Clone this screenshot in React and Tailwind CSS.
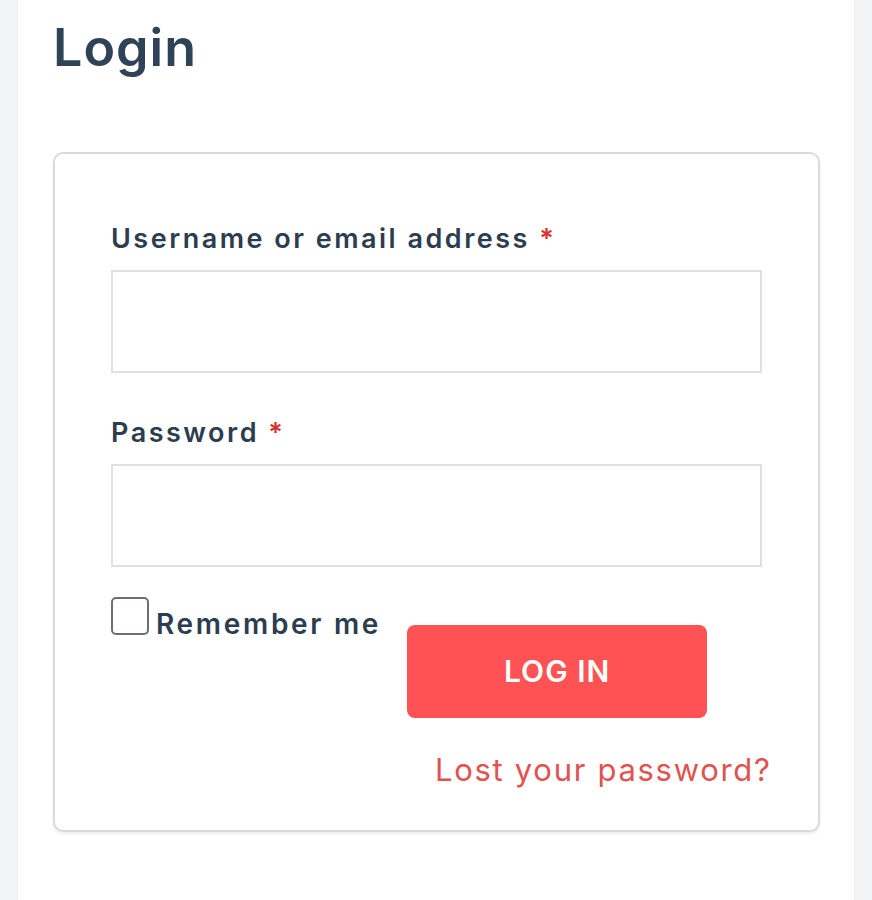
import React from 'react';

const Label = ({ children }) => (
  <label className="block text-[27px] leading-[30px] font-semibold text-[#2c3d50] tracking-[2.5px]">
    {children} <span className="text-[#d9302e]">*</span>
  </label>
);

const App = () => {
  return (
    <div className="min-h-screen bg-[#f2f3f5] px-[18px] font-['Inter',sans-serif]">
      <div className="min-h-screen bg-white pl-[35px] pr-[34px] pt-[18px]">
        <h1 className="text-[52px] leading-[60px] font-semibold text-[#2f4256] tracking-[1px]">
          Login
        </h1>

        <div className="mt-[74px] rounded-[10px] border-2 border-[#dadada] shadow-[0_2px_3px_rgba(0,0,0,0.08)] px-[56px] pt-[70px] pb-[40px]">
          <Label>Username or email address</Label>
          <input
            type="text"
            className="mt-[16px] block w-full h-[103px] border-2 border-[#e0e0e0] outline-none"
          />

          <div className="mt-[45px]">
            <Label>Password</Label>
          </div>
          <input
            type="password"
            className="mt-[16px] block w-full h-[103px] border-2 border-[#e0e0e0] outline-none"
          />

          <div className="flex items-start mt-[30px]">
            <label className="flex items-start">
              <span className="block w-[38px] h-[38px] rounded-[5px] border-2 border-[#6b6f73] bg-white" />
              <span className="ml-[7px] mt-[11px] text-[28px] leading-[32px] font-semibold text-[#2c3d50] tracking-[2.7px] whitespace-nowrap">
                Remember me
              </span>
            </label>
            <button className="ml-[26px] mt-[28px] w-[300px] h-[93px] shrink-0 rounded-[8px] bg-[#fe5254] text-white text-[30px] font-semibold tracking-[1px]">
              LOG IN
            </button>
          </div>

          <div className="mt-[32px] pl-[324px] whitespace-nowrap">
            <a className="text-[31px] leading-[40px] text-[#e2524f] tracking-[1.7px]">
              Lost your password?
            </a>
          </div>
        </div>
      </div>
    </div>
  );
};

export default App;
